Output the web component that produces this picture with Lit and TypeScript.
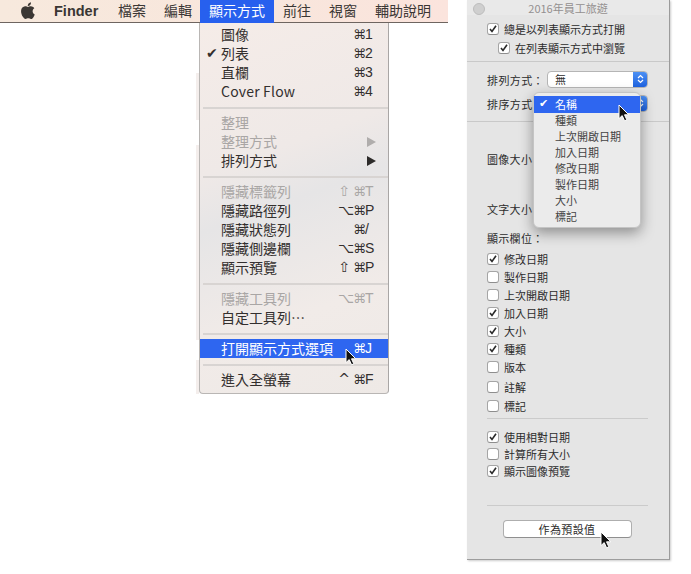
import { LitElement, html, css, svg } from "lit";
import { customElement } from "lit/decorators.js";

const cursor = svg`<path d="M1 1V14.6L4.2 11.6L6.6 16.8L8.8 15.8L6.5 10.8H10.8L1 1Z" fill="#111" stroke="#fff" stroke-width="1"/>`;
const apple = svg`<path d="M10.2 3.9C9.6 4.6 8.7 5.1 7.8 5C7.7 4.1 8.1 3.1 8.6 2.5C9.2 1.8 10.2 1.3 11 1.2C11.1 2.2 10.8 3.1 10.2 3.9ZM11 5.2C9.7 5.1 8.6 5.9 8 5.9C7.3 5.9 6.3 5.2 5.2 5.2C3.8 5.3 2.5 6.1 1.8 7.3C.3 9.9 1.4 13.7 2.9 15.8C3.6 16.8 4.4 18 5.6 18C6.6 17.9 7 17.3 8.3 17.3C9.5 17.3 9.9 18 11 18C12.1 18 12.9 16.9 13.6 15.9C14.4 14.7 14.7 13.6 14.7 13.5C14.7 13.5 12.6 12.7 12.6 10.3C12.6 8.3 14.2 7.3 14.3 7.2C13.4 5.8 11.9 5.3 11 5.2Z" fill="#3b3734"/>`;

type Item = { t?: string; m?: string; k?: string; off?: boolean; chk?: boolean; arrow?: boolean; sel?: boolean; cur?: boolean; sep?: boolean };

const items: Item[] = [
  { t: "圖像", k: "1" }, { t: "列表", k: "2", chk: true }, { t: "直欄", k: "3" }, { t: "Cover Flow", k: "4" },
  { sep: true },
  { t: "整理", off: true }, { t: "整理方式", off: true, arrow: true }, { t: "排列方式", arrow: true },
  { sep: true },
  { t: "隱藏標籤列", m: "⇧", k: "T", off: true }, { t: "隱藏路徑列", m: "⌥", k: "P" }, { t: "隱藏狀態列", k: "/" }, { t: "隱藏側邊欄", m: "⌥", k: "S" }, { t: "顯示預覽", m: "⇧", k: "P" },
  { sep: true },
  { t: "隱藏工具列", m: "⌥", k: "T", off: true }, { t: "自定工具列⋯" },
  { sep: true },
  { t: "打開顯示方式選項", k: "J", sel: true, cur: true },
  { sep: true },
  { t: "進入全螢幕", m: "^", k: "F" },
];

const cols: [string, boolean, string][] = [
  ["修改日期", true, ""], ["製作日期", false, ""], ["上次開啟日期", false, ""], ["加入日期", true, ""], ["大小", true, ""], ["種類", true, ""], ["版本", false, ""], ["註解", false, "g2"], ["標記", false, "g1"],
];
const opts = ["名稱", "種類", "上次開啟日期", "加入日期", "修改日期", "製作日期", "大小", "標記"];

const updown = html`<svg width="9" height="10" viewBox="0 0 9 10"><path d="M2 4L4.5 1.5L7 4M2 6L4.5 8.5L7 6" fill="none" stroke="#fff" stroke-width="1.2"/></svg>`;

@customElement("app-root")
export class AppRoot extends LitElement {
  static styles = css`
    :host { display: block; width: 691px; height: 574px; background: #fff; overflow: hidden;
      font-family: "Noto Sans CJK TC", "Liberation Sans", sans-serif; color: #2d2b2a; }
    .page { display: flex; align-items: flex-start; height: 574px; }
    .left { width: 448px; flex: none; }
    .bar { height: 23px; box-sizing: border-box; border-bottom: 1px solid #6e6560; display: flex;
      background: linear-gradient(90deg, #f7e9dd, #f8e6dc 60%, #fbe4dd); font-size: 14px; line-height: 21px; color: #3a3634; }
    .bar span { flex: none; }
    .apple { width: 16px; height: 19px; margin: 1px 0 0 20px; flex: none; }
    .fi { margin-left: 18px; width: 44px; font: bold 14.5px/22px "Liberation Sans", sans-serif; white-space: nowrap; }
    .m1 { margin-left: 20px; }
    .m2 { margin-left: 18px; }
    .act { margin-left: 8px; width: 56px; padding: 0 9px; background: #2760ee; color: #fff; margin-bottom: -1px; white-space: nowrap; }
    .mn { margin-left: 9px; }
    .menu { margin-left: 199px; width: 190px; height: 371px; box-sizing: border-box; padding-top: 2px; position: relative;
      border: 1px solid #b9b6b4; border-top: 0; border-right-color: #a9a6a5; border-radius: 0 0 4px 4px;
      background: linear-gradient(160deg, #f5ece8 0%, #efe9e7 35%, #e6e5e6 48%, #f1ebe8 75%, #eee9e6 100%); font-size: 14px; }
    .menu::before { content: ""; position: absolute; left: -4px; top: 0; width: 3px; height: 371px;
      background: linear-gradient(#fff 50px, #f4eeec 50px, #f4eeec 97px, #fff 97px, #fff 122px, #f4eeec 122px, #f4eeec 317px, #fff 317px, #fff 337px, #f4eeec 337px); }
    .row { height: 19px; line-height: 19px; display: flex; position: relative; padding: 0 13px 0 21px; white-space: nowrap; color: #332f2e; }
    .row.off { color: #a9a6a5; }
    .row.sel { background: #2e66f0; color: #fff; }
    .lab { flex: 1; }
    .lat { letter-spacing: .2px; }
    .key { display: flex; width: 37px; flex: none; font-family: "Liberation Sans", "DejaVu Sans", sans-serif; font-size: 14px; }
    .mod { width: 12px; margin-right: 3px; text-align: right; font-family: "DejaVu Sans", sans-serif; flex: none; }
    .cmd { width: 12px; font-family: "DejaVu Sans", sans-serif; font-size: 13px; flex: none; }
    .chk { position: absolute; left: 6px; top: 0; font-family: "DejaVu Sans", sans-serif; font-size: 14px; }
    .arr { width: 0; height: 0; margin: 5px -1px 0 0; border-left: 9px solid #2d2b2a; border-top: 5px solid transparent; border-bottom: 5px solid transparent; }
    .off .arr { border-left-color: #b0adac; }
    .sep { height: 2px; margin: 6px 0 4px 3px; background: #d8d4d2; }
    .cur { position: absolute; width: 12px; height: 18px; overflow: visible; z-index: 3; }
    .row .cur { left: 145px; top: 9px; }

    .panel { margin-left: 19px; width: 203px; height: 560px; flex: none; box-sizing: border-box; position: relative;
      background: #e5e5e5; border-right: 1px solid #9b9b9b; border-bottom: 1px solid #9d9d9d; font-size: 11px; line-height: 16px; color: #2c2c2c; box-shadow: 1px 1px 2px #ccc; }
    .title { height: 15px; text-align: center; font-size: 11px; line-height: 16px; color: #949090; position: relative; background: #e9e9e9; }
    .dot { position: absolute; left: 6px; top: 3px; width: 10px; height: 10px; border-radius: 50%; background: #cfcfcf; border: 1px solid #bdbdbd; }
    .sec { display: flex; flex-direction: column; }
    .top { height: 47px; padding: 5px 0 0 20px; box-sizing: border-box; border-bottom: 1px solid #c9c9c9; }
    .ck { display: flex; align-items: center; gap: 5px; height: 18px; white-space: nowrap; }
    .in { margin-left: 11px; margin-top: 1px; }
    .box { width: 12px; height: 12px; box-sizing: border-box; flex: none; border: 1px solid #a5a5a5; border-bottom-color: #8e8e8e; border-radius: 3px; background: #fff; display: block; }
    .box svg { display: block; width: 10px; height: 10px; }
    .sort { height: 60px; padding: 9px 0 0 20px; box-sizing: border-box; border-bottom: 1px solid #c9c9c9; }
    .fr { display: flex; align-items: center; height: 17px; }
    .fr + .fr { margin-top: 7px; }
    .fl { width: 60px; flex: none; letter-spacing: .4px; white-space: nowrap; }
    .sel2 { width: 101px; height: 17px; box-sizing: border-box; border: 1px solid #b5b5b5; border-radius: 4px; background: #fff; display: flex; justify-content: space-between; padding-left: 7px; line-height: 15px; position: relative; overflow: hidden; }
    .sel2 b { display: block; width: 15px; height: 17px; margin: -1px -1px 0 auto; background: linear-gradient(#4f93f5, #1c5fdd); position: relative; }
    .sel2 b svg { display: block; margin: 3px 0 0 3px; }
    .lbl { padding-left: 20px; height: 16px; letter-spacing: .3px; }
    .lbl.a { margin-top: 29px; }
    .lbl.b { margin-top: 34px; }
    .lbl.c { margin-top: 13px; }
    .cols { padding-left: 20px; margin-top: 4px; }
    .cols .ck.g2 { margin-top: 2px; }
    .cols .ck.g1 { margin-top: 1px; }
    .cols.tight { margin-top: 9px; }
    .tight .ck { height: 17px; }
    .div { height: 1px; background: #cbcbcb; margin: 3px 0 0 20px; width: 161px; }
    .div.d2 { margin-top: 26px; }
    .foot { display: flex; justify-content: center; padding: 14px 18px 0 16px; }
    .btn { width: 129px; height: 18px; box-sizing: border-box; border: 1px solid #aeaeae; border-bottom-color: #8f8f8f; border-radius: 4px; background: #fff; text-align: center; line-height: 16px; font-size: 11px; letter-spacing: .4px; }

    .drop { position: absolute; left: 66px; top: 92px; width: 108px; height: 136px; box-sizing: border-box; padding-top: 3px; border-radius: 6px;
      background: #ebebeb; border: 1px solid #c4c4c4; box-shadow: 0 5px 14px rgba(0,0,0,.38); z-index: 2; }
    .opt { height: 16px; line-height: 16px; padding-left: 21px; position: relative; color: #444; white-space: nowrap; }
    .opt.on { background: #2e66f0; color: #fff; height: 17px; margin-bottom: -1px; }
    .opt .tick { position: absolute; left: 5px; top: 0; font-family: "DejaVu Sans", sans-serif; font-size: 11px; }
    .c1 { left: 84px; top: 11px; }
    .c2 { left: 133px; top: 531px; }
  `;

  private box(on: boolean) {
    return html`<span class="box">${on ? html`<svg viewBox="0 0 10 10"><path d="M2 5L4 7.5L8 1.8" fill="none" stroke="#2a2a2a" stroke-width="1.6"/></svg>` : ""}</span>`;
  }

  private ck(t: string, on: boolean, cls = "") {
    return html`<div class="ck ${cls}">${this.box(on)}<span>${t}</span></div>`;
  }

  render() {
    return html`<div class="page">
      <div class="left">
        <div class="bar">
          <svg class="apple" viewBox="0 0 16 19">${apple}</svg>
          <span class="fi">Finder</span>
          <span class="m1">檔案</span><span class="m2">編輯</span>
          <span class="act">顯示方式</span>
          <span class="mn">前往</span><span class="m2">視窗</span><span class="m2">輔助說明</span>
        </div>
        <div class="menu">
          ${items.map((i) => i.sep ? html`<div class="sep"></div>` : html`
            <div class="row ${i.off ? "off" : ""} ${i.sel ? "sel" : ""}">
              ${i.chk ? html`<span class="chk">✔</span>` : ""}
              <span class="lab ${i.t === "Cover Flow" ? "lat" : ""}">${i.t}</span>
              ${i.k ? html`<span class="key"><span class="mod">${i.m ?? ""}</span><span class="cmd">⌘</span><span>${i.k}</span></span>` : ""}
              ${i.arrow ? html`<span class="arr"></span>` : ""}
              ${i.cur ? html`<svg class="cur" viewBox="0 0 12 18">${cursor}</svg>` : ""}
            </div>`)}
        </div>
      </div>
      <div class="panel">
        <div class="title"><span class="dot"></span>2016年員工旅遊</div>
        <div class="sec top">
          ${this.ck("總是以列表顯示方式打開", true)}
          ${this.ck("在列表顯示方式中瀏覽", true, "in")}
        </div>
        <div class="sec sort">
          <div class="fr"><span class="fl">排列方式：</span><div class="sel2">無<b>${updown}</b></div></div>
          <div class="fr"><span class="fl">排序方式</span><div class="sel2"><b>${updown}</b></div></div>
        </div>
        <div class="lbl a">圖像大小</div>
        <div class="lbl b">文字大小</div>
        <div class="lbl c">顯示欄位：</div>
        <div class="cols sec">
          ${cols.map(([t, on, c]) => this.ck(t, on, c))}
        </div>
        <div class="div"></div>
        <div class="cols sec tight">
          ${this.ck("使用相對日期", true)}
          ${this.ck("計算所有大小", false)}
          ${this.ck("顯示圖像預覽", true)}
        </div>
        <div class="div d2"></div>
        <div class="foot"><div class="btn">作為預設值</div></div>
        <div class="drop">
          ${opts.map((o, i) => html`<div class="opt ${i === 0 ? "on" : ""}">${i === 0 ? html`<span class="tick">✔</span>` : ""}${o}</div>`)}
          <svg class="cur c1" viewBox="0 0 12 18">${cursor}</svg>
        </div>
        <svg class="cur c2" viewBox="0 0 12 18">${cursor}</svg>
      </div>
    </div>`;
  }
}
